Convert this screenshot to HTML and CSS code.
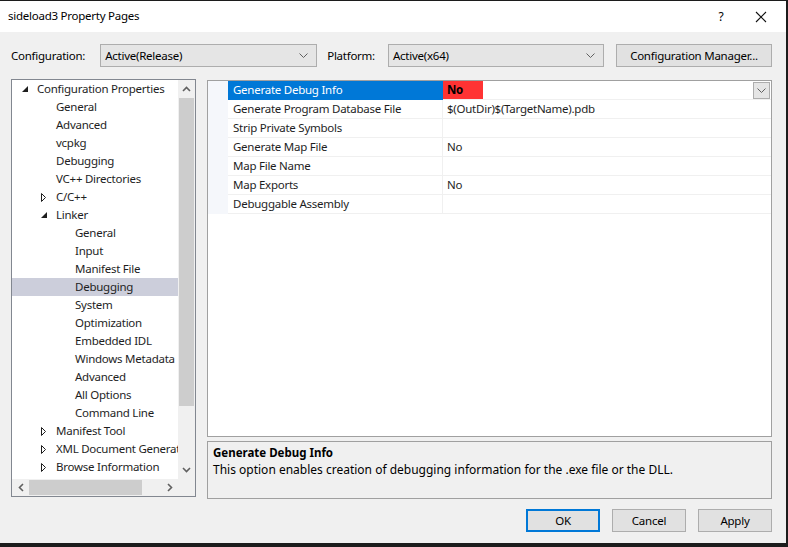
FILE: index.html
```html
<!DOCTYPE html>
<html>
<head>
<meta charset="utf-8">
<link rel="stylesheet" href="styles.css">
</head>
<body>
<div class="window">
  <div class="titlebar">
    <span class="title">sideload3 Property Pages</span>
    <span class="tb-help">?</span>
    <span class="tb-close"><svg width="12" height="12" viewBox="0 0 12 12"><path d="M1 1L11 11M11 1L1 11" stroke="#111" stroke-width="1.1" fill="none"/></svg></span>
  </div>
  <div class="body">
    <div class="configrow">
      <span class="lbl">Configuration:</span>
      <div class="combo combo-config"><span>Active(Release)</span><svg class="chev" width="9" height="5" viewBox="0 0 9 5"><path d="M0.5 0.5L4.5 4.5L8.5 0.5" stroke="#606060" fill="none"/></svg></div>
      <span class="lbl lbl-plat">Platform:</span>
      <div class="combo combo-plat"><span>Active(x64)</span><svg class="chev" width="9" height="5" viewBox="0 0 9 5"><path d="M0.5 0.5L4.5 4.5L8.5 0.5" stroke="#606060" fill="none"/></svg></div>
      <div class="btn btn-cm">Configuration Manager...</div>
    </div>
    <div class="main">
      <div class="tree">
        <div class="tree-top">
          <div class="tree-items">
            <div class="ti l0"><svg class="exp" width="6" height="6" viewBox="0 0 6 6"><path d="M6 0L6 6L0 6Z" fill="#1e1e1e"/></svg>Configuration Properties</div>
            <div class="ti l1">General</div>
            <div class="ti l1">Advanced</div>
            <div class="ti l1">vcpkg</div>
            <div class="ti l1">Debugging</div>
            <div class="ti l1">VC++ Directories</div>
            <div class="ti l1 has"><svg class="col" width="5" height="9" viewBox="0 0 5 9"><path d="M0.5 0.5L4.5 4.5L0.5 8.5Z" stroke="#1e1e1e" fill="none"/></svg>C/C++</div>
            <div class="ti l1 has"><svg class="exp" width="6" height="6" viewBox="0 0 6 6"><path d="M6 0L6 6L0 6Z" fill="#1e1e1e"/></svg>Linker</div>
            <div class="ti l2">General</div>
            <div class="ti l2">Input</div>
            <div class="ti l2">Manifest File</div>
            <div class="ti l2 sel">Debugging</div>
            <div class="ti l2">System</div>
            <div class="ti l2">Optimization</div>
            <div class="ti l2">Embedded IDL</div>
            <div class="ti l2">Windows Metadata</div>
            <div class="ti l2">Advanced</div>
            <div class="ti l2">All Options</div>
            <div class="ti l2">Command Line</div>
            <div class="ti l1 has"><svg class="col" width="5" height="9" viewBox="0 0 5 9"><path d="M0.5 0.5L4.5 4.5L0.5 8.5Z" stroke="#1e1e1e" fill="none"/></svg>Manifest Tool</div>
            <div class="ti l1 has"><svg class="col" width="5" height="9" viewBox="0 0 5 9"><path d="M0.5 0.5L4.5 4.5L0.5 8.5Z" stroke="#1e1e1e" fill="none"/></svg><span class="clip">XML Document Generator</span></div>
            <div class="ti l1 has"><svg class="col" width="5" height="9" viewBox="0 0 5 9"><path d="M0.5 0.5L4.5 4.5L0.5 8.5Z" stroke="#1e1e1e" fill="none"/></svg>Browse Information</div>
          </div>
          <div class="vscroll">
            <svg class="arr" width="9" height="6" viewBox="0 0 9 6"><path d="M1 5L4.5 1.5L8 5" stroke="#606060" stroke-width="1.6" fill="none"/></svg>
            <div class="vthumb-track"><div class="vthumb"></div></div>
            <svg class="arr" width="9" height="6" viewBox="0 0 9 6"><path d="M1 1L4.5 4.5L8 1" stroke="#606060" stroke-width="1.6" fill="none"/></svg>
          </div>
        </div>
        <div class="hscroll">
          <svg class="harr" width="6" height="9" viewBox="0 0 6 9"><path d="M5 1L1.5 4.5L5 8" stroke="#606060" stroke-width="1.6" fill="none"/></svg>
          <div class="hthumb-track"><div class="hthumb"></div></div>
          <svg class="harr" width="6" height="9" viewBox="0 0 6 9"><path d="M1 1L4.5 4.5L1 8" stroke="#606060" stroke-width="1.6" fill="none"/></svg>
          <div class="corner"></div>
        </div>
      </div>
      <div class="rightcol">
        <div class="grid">
          <div class="row selrow">
            <div class="gut"></div>
            <div class="name">Generate Debug Info</div>
            <div class="val"><span class="red">No</span><span class="ddbtn"><svg width="9" height="5" viewBox="0 0 9 5"><path d="M0.5 0.5L4.5 4.5L8.5 0.5" stroke="#606060" fill="none"/></svg></span></div>
          </div>
          <div class="row"><div class="gut"></div><div class="name">Generate Program Database File</div><div class="val">$(OutDir)$(TargetName).pdb</div></div>
          <div class="row"><div class="gut"></div><div class="name">Strip Private Symbols</div><div class="val"></div></div>
          <div class="row"><div class="gut"></div><div class="name">Generate Map File</div><div class="val">No</div></div>
          <div class="row"><div class="gut"></div><div class="name">Map File Name</div><div class="val"></div></div>
          <div class="row"><div class="gut"></div><div class="name">Map Exports</div><div class="val">No</div></div>
          <div class="row"><div class="gut"></div><div class="name">Debuggable Assembly</div><div class="val"></div></div>
        </div>
        <div class="desc">
          <div class="desc-title">Generate Debug Info</div>
          <div class="desc-text">This option enables creation of debugging information for the .exe file or the DLL.</div>
        </div>
      </div>
    </div>
    <div class="buttons">
      <div class="btn btn-ok">OK</div>
      <div class="btn">Cancel</div>
      <div class="btn">Apply</div>
    </div>
  </div>
</div>
</body>
</html>
```
FILE: styles.css
```css
* { box-sizing: border-box; }
html, body { margin: 0; padding: 0; }
body {
  background: #1c1c1c;
  width: 788px;
  height: 547px;
  overflow: hidden;
  font-family: "Noto Sans", "Open Sans", sans-serif;
  font-size: 11.5px;
  letter-spacing: -0.25px;
  color: #1e1e1e;
}
svg { flex-shrink: 0; }
.window {
  margin: 1px 2px 0 0;
  width: 786px;
  height: 542px;
  background: #f0f0f0;
  display: flex;
  flex-direction: column;
}
.titlebar {
  height: 31px;
  background: #ffffff;
  display: flex;
  align-items: center;
  padding-left: 8px;
}
.title { color: #000; flex: 1; position: relative; top: -1px; }
.tb-help { width: 20px; font-size: 12px; color: #000; margin-right: 24px; text-align: center; }
.tb-close { width: 12px; height: 12px; margin-right: 19px; display: flex; }
.body {
  flex: 1;
  display: flex;
  flex-direction: column;
  padding: 11px 14px 0 11px;
}
.configrow {
  display: flex;
  align-items: center;
  height: 24px;
}
.lbl { color: #000; }
.combo {
  height: 23px;
  background: #e5e5e5;
  border: 1px solid #adadad;
  display: flex;
  align-items: center;
  justify-content: space-between;
  padding: 0 8px 0 4px;
  color: #000;
}
.combo-config { width: 217px; margin-left: 15px; }
.lbl-plat { margin-left: 10px; }
.combo-plat { width: 216px; margin-left: 13px; }
.btn {
  height: 23px;
  width: 74px;
  background: #e1e1e1;
  border: 1px solid #adadad;
  display: flex;
  align-items: center;
  justify-content: center;
  color: #000;
}
.btn-cm { width: 156px; margin-left: auto; }
.main {
  display: flex;
  align-items: flex-start;
  margin-top: 12px;
  gap: 11px;
}
.tree {
  width: 185px;
  height: 418px;
  border: 1px solid #828790;
  display: flex;
  flex-direction: column;
  background: #f0f0f0;
}
.tree-top { flex: 1; display: flex; min-height: 0; }
.tree-items {
  width: 166px;
  background: #fff;
  overflow: hidden;
  white-space: nowrap;
}
.ti {
  height: 18px;
  line-height: 18px;
  display: flex;
  align-items: center;
  overflow: hidden;
}
.clip { overflow: hidden; }
.ti.l0 { padding-left: 10px; }
.ti.l0 .exp { margin-right: 9px; }
.ti.l1 { padding-left: 44px; }
.ti.l1.has { padding-left: 29px; }
.ti.l1 .col { margin-right: 10px; }
.ti.l1 .exp { margin-right: 9px; }
.ti.l2 { padding-left: 63px; }
.ti.sel { background: #cccedb; }
.vscroll {
  width: 17px;
  display: flex;
  flex-direction: column;
  align-items: center;
  background: #f0f0f0;
}
.vscroll .arr { margin: 6px 0; }
.vthumb-track { flex: 1; width: 100%; padding: 0 1px; }
.vthumb { height: 308px; background: #cdcdcd; }
.hscroll {
  height: 17px;
  display: flex;
  align-items: center;
  background: #f0f0f0;
}
.harr { margin: 0 6px; }
.hthumb-track { width: 137px; height: 100%; padding: 1px 0; margin-left: -1px; }
.hthumb { width: 113px; height: 100%; background: #cdcdcd; }
.corner { width: 17px; }
.rightcol {
  width: 566px;
  display: flex;
  flex-direction: column;
  gap: 4px;
  margin-top: 1px;
}
.grid {
  height: 357px;
  border: 1px solid #a0a0a0;
  background: #fff;
}
.row {
  display: flex;
  height: 19px;
}
.gut { width: 20px; background: #f5f7fb; }
.name {
  width: 215px;
  padding-left: 5px;
  line-height: 18px;
  border-bottom: 1px solid #f0f0f0;
  border-right: 1px solid #f0f0f0;
  white-space: nowrap;
  color: #1e1e1e;
}
.val {
  flex: 1;
  padding-left: 4px;
  line-height: 18px;
  border-bottom: 1px solid #f0f0f0;
  white-space: nowrap;
  display: flex;
  align-items: flex-start;
  justify-content: space-between;
  color: #1e1e1e;
}
.selrow .name { background: #0078d7; color: #fff; border-right-color: #0078d7; border-bottom-color: #0078d7; }
.selrow .val { padding-left: 0; }
.red {
  background: #ff3333;
  width: 40px;
  height: 18px;
  padding-left: 4px;
  font-weight: bold;
  color: #000;
}
.ddbtn {
  width: 17px;
  height: 17px;
  margin-top: 1px;
  margin-right: 1px;
  background: #e5e5e5;
  border: 1px solid #adadad;
  display: flex;
  align-items: center;
  justify-content: center;
}
.desc {
  height: 58px;
  border: 1px solid #a0a0a0;
  background: #f0f0f0;
  padding: 2px 5px;
  color: #000;
}
.desc-title { font-weight: bold; line-height: 17px; letter-spacing: 0; }
.desc-text { line-height: 17px; font-size: 12px; letter-spacing: 0; }
.buttons {
  display: flex;
  justify-content: flex-end;
  gap: 12px;
  margin-top: 10px;
}
.btn-ok { border: 2px solid #0078d7; }
```
